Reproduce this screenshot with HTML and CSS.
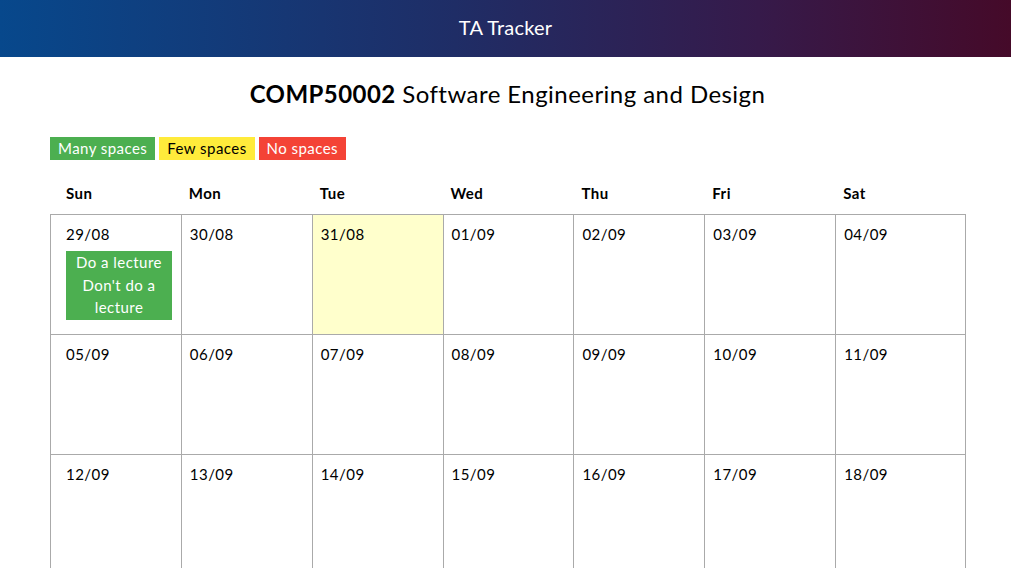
FILE: index.html
```html
<!DOCTYPE html>
<html>
<head>
<meta charset="utf-8">
<link rel="stylesheet" href="styles.css">
</head>
<body>
<header class="topbar">TA Tracker</header>
<main class="content">
  <h1 class="course"><b>COMP50002</b> Software Engineering and Design</h1>
  <div class="legend">
    <span class="tag green">Many spaces</span>
    <span class="tag yellow">Few spaces</span>
    <span class="tag red">No spaces</span>
  </div>
  <div class="calendar">
    <div class="dow first">Sun</div><div class="dow">Mon</div><div class="dow">Tue</div><div class="dow">Wed</div><div class="dow">Thu</div><div class="dow">Fri</div><div class="dow">Sat</div>
    <div class="day first"><div class="date">29/08</div><div class="event">Do a lecture<br>Don't do a lecture</div></div>
    <div class="day"><div class="date">30/08</div></div>
    <div class="day today"><div class="date">31/08</div></div>
    <div class="day"><div class="date">01/09</div></div>
    <div class="day"><div class="date">02/09</div></div>
    <div class="day"><div class="date">03/09</div></div>
    <div class="day"><div class="date">04/09</div></div>
    <div class="day first"><div class="date">05/09</div></div>
    <div class="day"><div class="date">06/09</div></div>
    <div class="day"><div class="date">07/09</div></div>
    <div class="day"><div class="date">08/09</div></div>
    <div class="day"><div class="date">09/09</div></div>
    <div class="day"><div class="date">10/09</div></div>
    <div class="day"><div class="date">11/09</div></div>
    <div class="day first"><div class="date">12/09</div></div>
    <div class="day"><div class="date">13/09</div></div>
    <div class="day"><div class="date">14/09</div></div>
    <div class="day"><div class="date">15/09</div></div>
    <div class="day"><div class="date">16/09</div></div>
    <div class="day"><div class="date">17/09</div></div>
    <div class="day"><div class="date">18/09</div></div>
  </div>
</main>
</body>
</html>
```
FILE: styles.css
```css
html, body {
  margin: 0;
  padding: 0;
}
body {
  font-family: "Lato", "Open Sans", sans-serif;
  font-size: 15px;
  letter-spacing: 0.03em;
  color: #000;
  background: #fff;
}
.topbar {
  height: 57px;
  box-sizing: border-box;
  padding-bottom: 3px;
  display: flex;
  align-items: center;
  justify-content: center;
  color: #fff;
  font-size: 20px;
  letter-spacing: 0.01em;
  background: linear-gradient(to right, #07488c, #1f2d66 45%, #361a4a 75%, #450a29);
}
.content {
  padding: 0 46px 0 50px;
}
.course {
  margin: 20px 0 0;
  text-align: center;
  font-size: 24px;
  font-weight: 400;
  line-height: 34px;
}
.course b {
  font-weight: 700;
}
.legend {
  display: flex;
  gap: 4px;
  margin-top: 26px;
}
.tag {
  display: inline-block;
  height: 23px;
  line-height: 23px;
  padding: 0 8px;
}
.green { background: #4caf50; color: #fff; }
.yellow { background: #ffeb3b; color: #000; }
.red { background: #f44336; color: #fff; }
.calendar {
  margin-top: 10px;
  width: 916px;
  display: grid;
  grid-template-columns: repeat(7, 1fr);
  grid-template-rows: 44px repeat(3, 120px);
}
.dow {
  font-weight: 700;
  padding: 14px 8px 0;
}
.dow.first { padding-left: 16px; }
.day {
  border-left: 1px solid #aaa;
  border-top: 1px solid #aaa;
  padding: 9px 8px 0;
}
.day:nth-child(7n) { border-right: 1px solid #aaa; }
.day.first { padding-left: 15px; }
.today { background: #ffffcc; }
.date {
  line-height: 20px;
}
.event {
  margin-top: 7px;
  width: 106px;
  background: #4caf50;
  color: #fff;
  text-align: center;
  line-height: 22.5px;
  padding: 0 0 1px;
}
```
